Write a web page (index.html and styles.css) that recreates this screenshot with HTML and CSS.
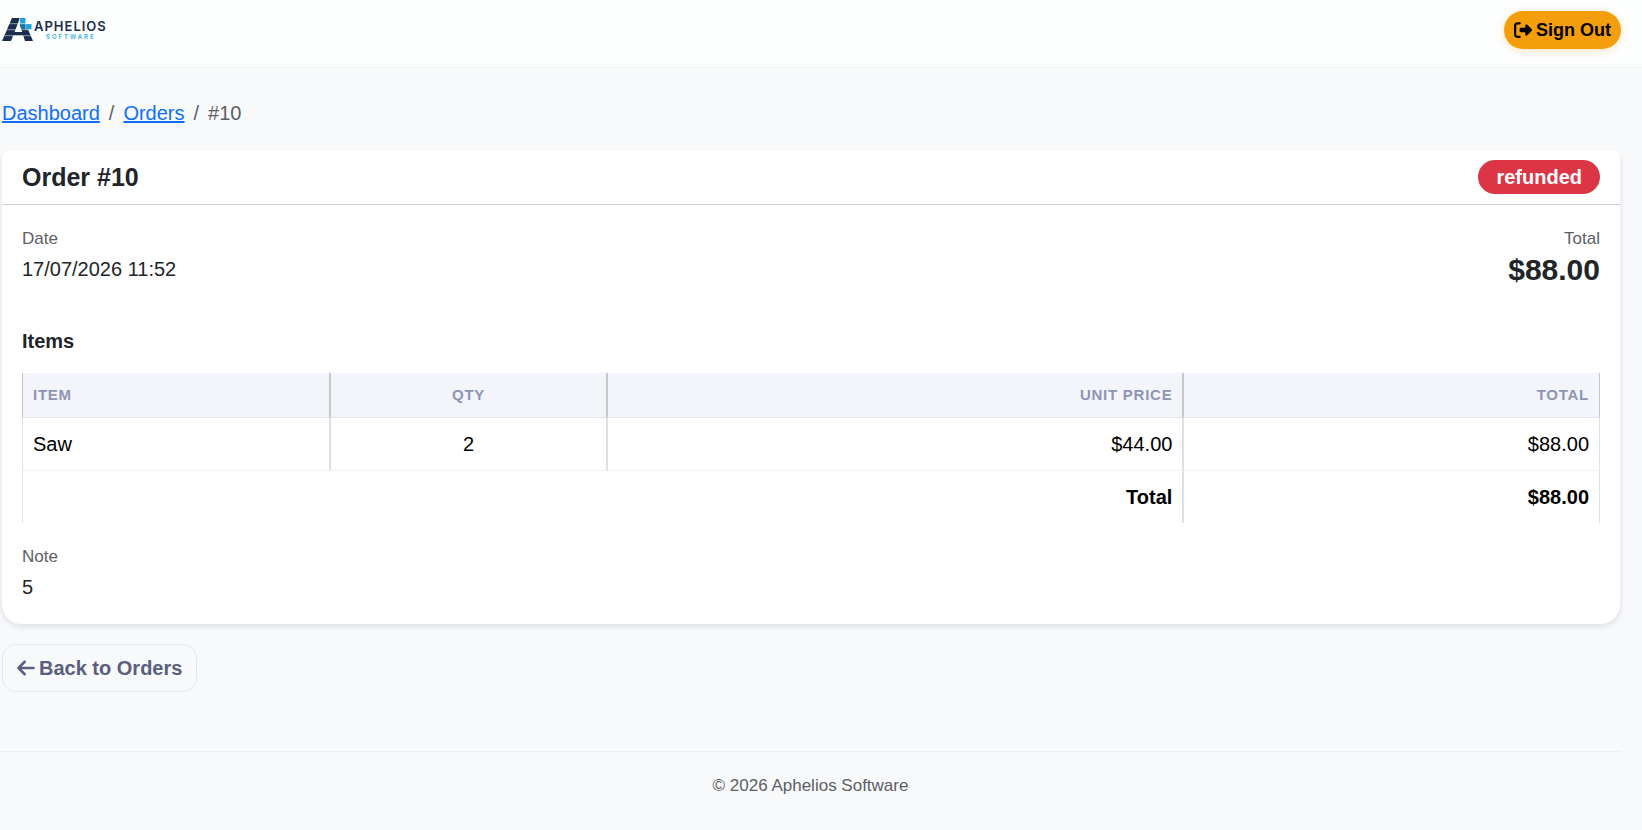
FILE: index.html
```html
<!DOCTYPE html>
<html lang="en">
<head>
  <meta charset="utf-8">
  <meta name="viewport" content="width=device-width, initial-scale=1">
  <title>Order #10</title>
  <link rel="stylesheet" href="styles.css">
</head>
<body>
  <header class="navbar">
    <a href="#" class="brand" aria-label="Aphelios Software">
      <svg width="112" height="26" viewBox="0 0 112 26">
        <path d="M11 2h8l-9 23H1z" fill="#1b2d4f"/>
        <path d="M18.500 7.500h6L32 25h-8z" fill="#1b2d4f"/>
        <path d="M11 16h12l2 3.500H9z" fill="#1b2d4f"/>
        <path d="M19 2h5.500v5.500H19zM25 8h5.500v5.500H25z" fill="#1ba1dc"/>
        <path d="M19 8h5.500v5H20z" fill="#1b75b0"/>
        <path d="M0 7.700h30M0 13.700h32M0 19.700h32M18.700 2v6M24.700 8v6" stroke="#fdfefe" stroke-width=".5"/>
        <text class="brand-name" x="33" y="15">APHELIOS</text>
        <text class="brand-sub" x="45" y="23">SOFTWARE</text>
      </svg>
    </a>
    <button type="button" class="signout">
      <svg width="18" height="18" viewBox="0 0 512 512" fill="currentColor"><path d="M377.900 105.900L500.700 228.700c7.200 7.200 11.300 17.100 11.300 27.300s-4.100 20.100-11.300 27.300L377.900 406.100c-6.400 6.400-15 9.900-24 9.900c-18.700 0-33.900-15.200-33.900-33.900l0-62.100-128 0c-17.700 0-32-14.300-32-32l0-64c0-17.700 14.300-32 32-32l128 0 0-62.100c0-18.700 15.200-33.900 33.900-33.900c9 0 17.600 3.600 24 9.900zM160 96L96 96c-17.700 0-32 14.300-32 32l0 256c0 17.700 14.300 32 32 32l64 0c17.700 0 32 14.300 32 32s-14.300 32-32 32l-64 0c-53 0-96-43-96-96L0 128C0 75 43 32 96 32l64 0c17.700 0 32 14.300 32 32s-14.300 32-32 32z"/></svg>
      Sign Out
    </button>
  </header>

  <main class="container">
    <nav aria-label="breadcrumb">
      <ol class="breadcrumb">
        <li><a href="#">Dashboard</a></li>
        <li><a href="#">Orders</a></li>
        <li aria-current="page">#10</li>
      </ol>
    </nav>

    <section class="card">
      <div class="card-header">
        <h1>Order #10</h1>
        <span class="badge">refunded</span>
      </div>
      <div class="card-body">
        <div class="summary">
          <div>
            <div class="label">Date</div>
            <div>17/07/2026 11:52</div>
          </div>
          <div class="summary-total">
            <div class="label">Total</div>
            <div class="amount">$88.00</div>
          </div>
        </div>

        <h2>Items</h2>
        <table class="items">
          <colgroup>
            <col class="col-item">
            <col class="col-qty">
            <col class="col-price">
            <col class="col-total">
          </colgroup>
          <thead>
            <tr>
              <th>Item</th>
              <th class="center">Qty</th>
              <th class="right">Unit Price</th>
              <th class="right">Total</th>
            </tr>
          </thead>
          <tbody>
            <tr>
              <td>Saw</td>
              <td class="center">2</td>
              <td class="right">$44.00</td>
              <td class="right">$88.00</td>
            </tr>
          </tbody>
          <tfoot>
            <tr>
              <td class="right" colspan="3">Total</td>
              <td class="right">$88.00</td>
            </tr>
          </tfoot>
        </table>

        <div class="label">Note</div>
        <div>5</div>
      </div>
    </section>

    <a href="#" class="back-btn">
      <svg width="18" height="20" viewBox="0 0 448 512" fill="currentColor"><path d="M9.400 233.400c-12.500 12.500-12.500 32.800 0 45.300l160 160c12.500 12.500 32.800 12.500 45.300 0s12.500-32.800 0-45.300L109.200 288 416 288c17.700 0 32-14.300 32-32s-14.300-32-32-32l-306.700 0L214.600 118.600c12.500-12.500 12.500-32.800 0-45.300s-32.800-12.500-45.300 0l-160 160z"/></svg>
      Back to Orders
    </a>
  </main>

  <footer class="footer">© 2026 Aphelios Software</footer>
</body>
</html>
```
FILE: styles.css
```css
* {
  box-sizing: border-box;
}

body {
  margin: 0;
  background: #f8f9fb;
  color: #212529;
  font-family: "Liberation Sans", Arial, sans-serif;
  font-size: 20px;
  line-height: 30px;
}

h1,
h2 {
  margin: 0;
}

.navbar {
  display: flex;
  align-items: flex-start;
  justify-content: space-between;
  height: 68px;
  padding: 11px 21px 0 1px;
  background: #fdfefe;
  border-bottom: 1px solid #eff1f3;
}

.brand {
  padding-top: 5px;
  line-height: 0;
}

.brand-name {
  fill: #1b2d4f;
  font-family: Inter, sans-serif;
  font-size: 13px;
  font-weight: 600;
  letter-spacing: 1px;
}

.brand-sub {
  fill: #35aee6;
  font-family: Inter, sans-serif;
  font-size: 6px;
  font-weight: 600;
  letter-spacing: 2px;
}

.signout {
  display: flex;
  align-items: center;
  gap: 4px;
  height: 38px;
  padding: 0 10px;
  border: 0;
  border-radius: 19px;
  background: #f59e0b;
  box-shadow: 0 2px 8px rgba(245, 158, 11, 0.25);
  color: #000;
  font-family: inherit;
  font-size: 18px;
  font-weight: bold;
  cursor: pointer;
}

.container {
  padding: 30px 22px 0 2px;
}

.breadcrumb {
  display: flex;
  margin: 0 0 22px;
  padding: 0;
  list-style: none;
  color: #5c6066;
}

.breadcrumb li + li::before {
  content: "/";
  padding: 0 9px;
}

.breadcrumb a {
  color: #0d6efd;
}

.card {
  margin-bottom: 20px;
  border-radius: 8px 8px 20px 20px;
  background: #fff;
  box-shadow: 0 3px 6px rgba(20, 20, 50, 0.1);
}

.card-header {
  display: flex;
  align-items: center;
  justify-content: space-between;
  padding: 10px 20px;
  border-bottom: 1px solid #ccced0;
}

.card-header h1 {
  font-size: 25px;
}

.badge {
  padding: 2px 18px;
  border-radius: 17px;
  background: #dc3545;
  color: #fff;
  font-weight: bold;
}

.card-body {
  padding: 20px 20px 22px;
}

.label {
  margin-bottom: 1px;
  color: #5c6066;
  font-size: 17px;
  line-height: 28px;
}

.summary {
  display: flex;
  justify-content: space-between;
  margin-bottom: 40px;
}

.summary-total {
  text-align: right;
}

.amount {
  font-size: 30px;
  font-weight: bold;
  line-height: 32px;
}

h2 {
  margin-bottom: 17px;
  font-size: 20px;
}

.items {
  width: 100%;
  margin-bottom: 20px;
  border-spacing: 0;
  table-layout: fixed;
  color: #000;
}

.col-item {
  width: 19.5%;
}

.col-qty {
  width: 17.6%;
}

.col-price {
  width: 36.5%;
}

.items th,
.items td {
  padding: 11px 10px;
  border: 0 solid #dee2e6;
  border-width: 0 1px;
  text-align: left;
}

.items th {
  padding: 7px 10px;
  border-color: #c6c7c8;
  border-bottom: 1px solid #e2e5ec;
  background: #f4f5fa;
  color: #8e94b5;
  font-size: 15px;
  letter-spacing: 0.05em;
  text-transform: uppercase;
}

.items tbody td {
  border-bottom: 1px solid #f0f1f6;
}

.items tfoot {
  font-weight: bold;
}

.items .center {
  text-align: center;
}

.items .right {
  text-align: right;
}

.back-btn {
  display: inline-flex;
  align-items: center;
  gap: 4px;
  padding: 8px 14px;
  border: 1px solid #e2e6f2;
  border-radius: 14px;
  color: #5a5f7d;
  font-weight: bold;
  text-decoration: none;
}

.footer {
  margin: 59px 21px 0 0;
  padding: 19px 0;
  border-top: 1px solid #eff0f2;
  color: #5c6066;
  font-size: 17px;
  text-align: center;
}
```
